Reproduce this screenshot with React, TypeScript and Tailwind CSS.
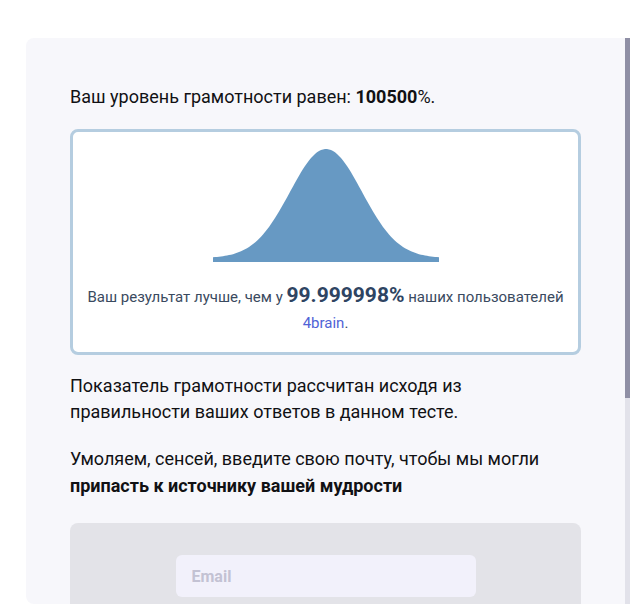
import { useMemo } from "react";

// Normal-distribution hump drawn over a thin base strip
function BellCurve() {
  const d = useMemo(() => {
    const w = 226;
    const base = 4;
    const h = 113;
    const sigma = 36;
    const pts: string[] = [];
    for (let x = 0; x <= w; x += 2) {
      const g = Math.exp(-((x - w / 2) ** 2) / (2 * sigma * sigma));
      const y = h - base - g * (h - base);
      pts.push(`${x},${y.toFixed(2)}`);
    }
    return `M0,${h} L${pts.join(" L")} L${w},${h} Z`;
  }, []);

  return (
    <svg width="226" height="113" viewBox="0 0 226 113" className="mx-auto block">
      <path d={d} fill="#6799c3" />
    </svg>
  );
}

export default function App() {
  return (
    <div className="h-[616px] w-[640px] overflow-hidden bg-white pl-[26px] pt-[38px] font-['Roboto','Noto_Sans',sans-serif]">
      <div className="flex h-[566px] w-[604px]">
        <div className="flex-1 overflow-hidden rounded-l-lg bg-[#f7f7fb] px-11 pt-[46px]">
          <p className="text-[18px] leading-[26px] text-[#111114]">
            Ваш уровень грамотности равен: <b className="font-bold">100500</b>%.
          </p>

          <div className="mt-[19px] rounded-lg border-[3px] border-[#b5cde0] bg-white px-3 pb-[16px] pt-[17px]">
            <BellCurve />
            <p className="mt-[20px] text-center text-[15px] leading-[26px] text-[#3a4a60]">
              Ваш результат лучше, чем у{" "}
              <span className="text-[21px] font-bold text-[#2e4462]">99.999998%</span> наших
              пользователей <span className="text-[#5063d6]">4brain</span>.
            </p>
          </div>

          <p className="mt-[18px] max-w-[480px] text-[18px] leading-[26px] text-[#111114]">
            Показатель грамотности рассчитан исходя из правильности ваших ответов в данном тесте.
          </p>

          <p className="mt-[20px] max-w-[480px] text-[18px] leading-[27px] text-[#111114]">
            Умоляем, сенсей, введите свою почту, чтобы мы могли{" "}
            <b className="font-bold">припасть к источнику вашей мудрости</b>
          </p>

          <div className="mt-[24px] h-[140px] rounded-lg bg-[#e3e3e8] pt-8">
            <input
              type="email"
              placeholder="Email"
              className="mx-auto block h-[42px] w-[300px] rounded-md bg-[#f2f1fb] px-4 text-[16px] font-bold text-[#3a3a4a] outline-none placeholder:text-[#c3c2d3]"
            />
          </div>
        </div>

        <div className="w-[5px] bg-[#e2e2ea]">
          <div className="h-[360px] bg-[#8f8fa5]" />
        </div>
      </div>
    </div>
  );
}
